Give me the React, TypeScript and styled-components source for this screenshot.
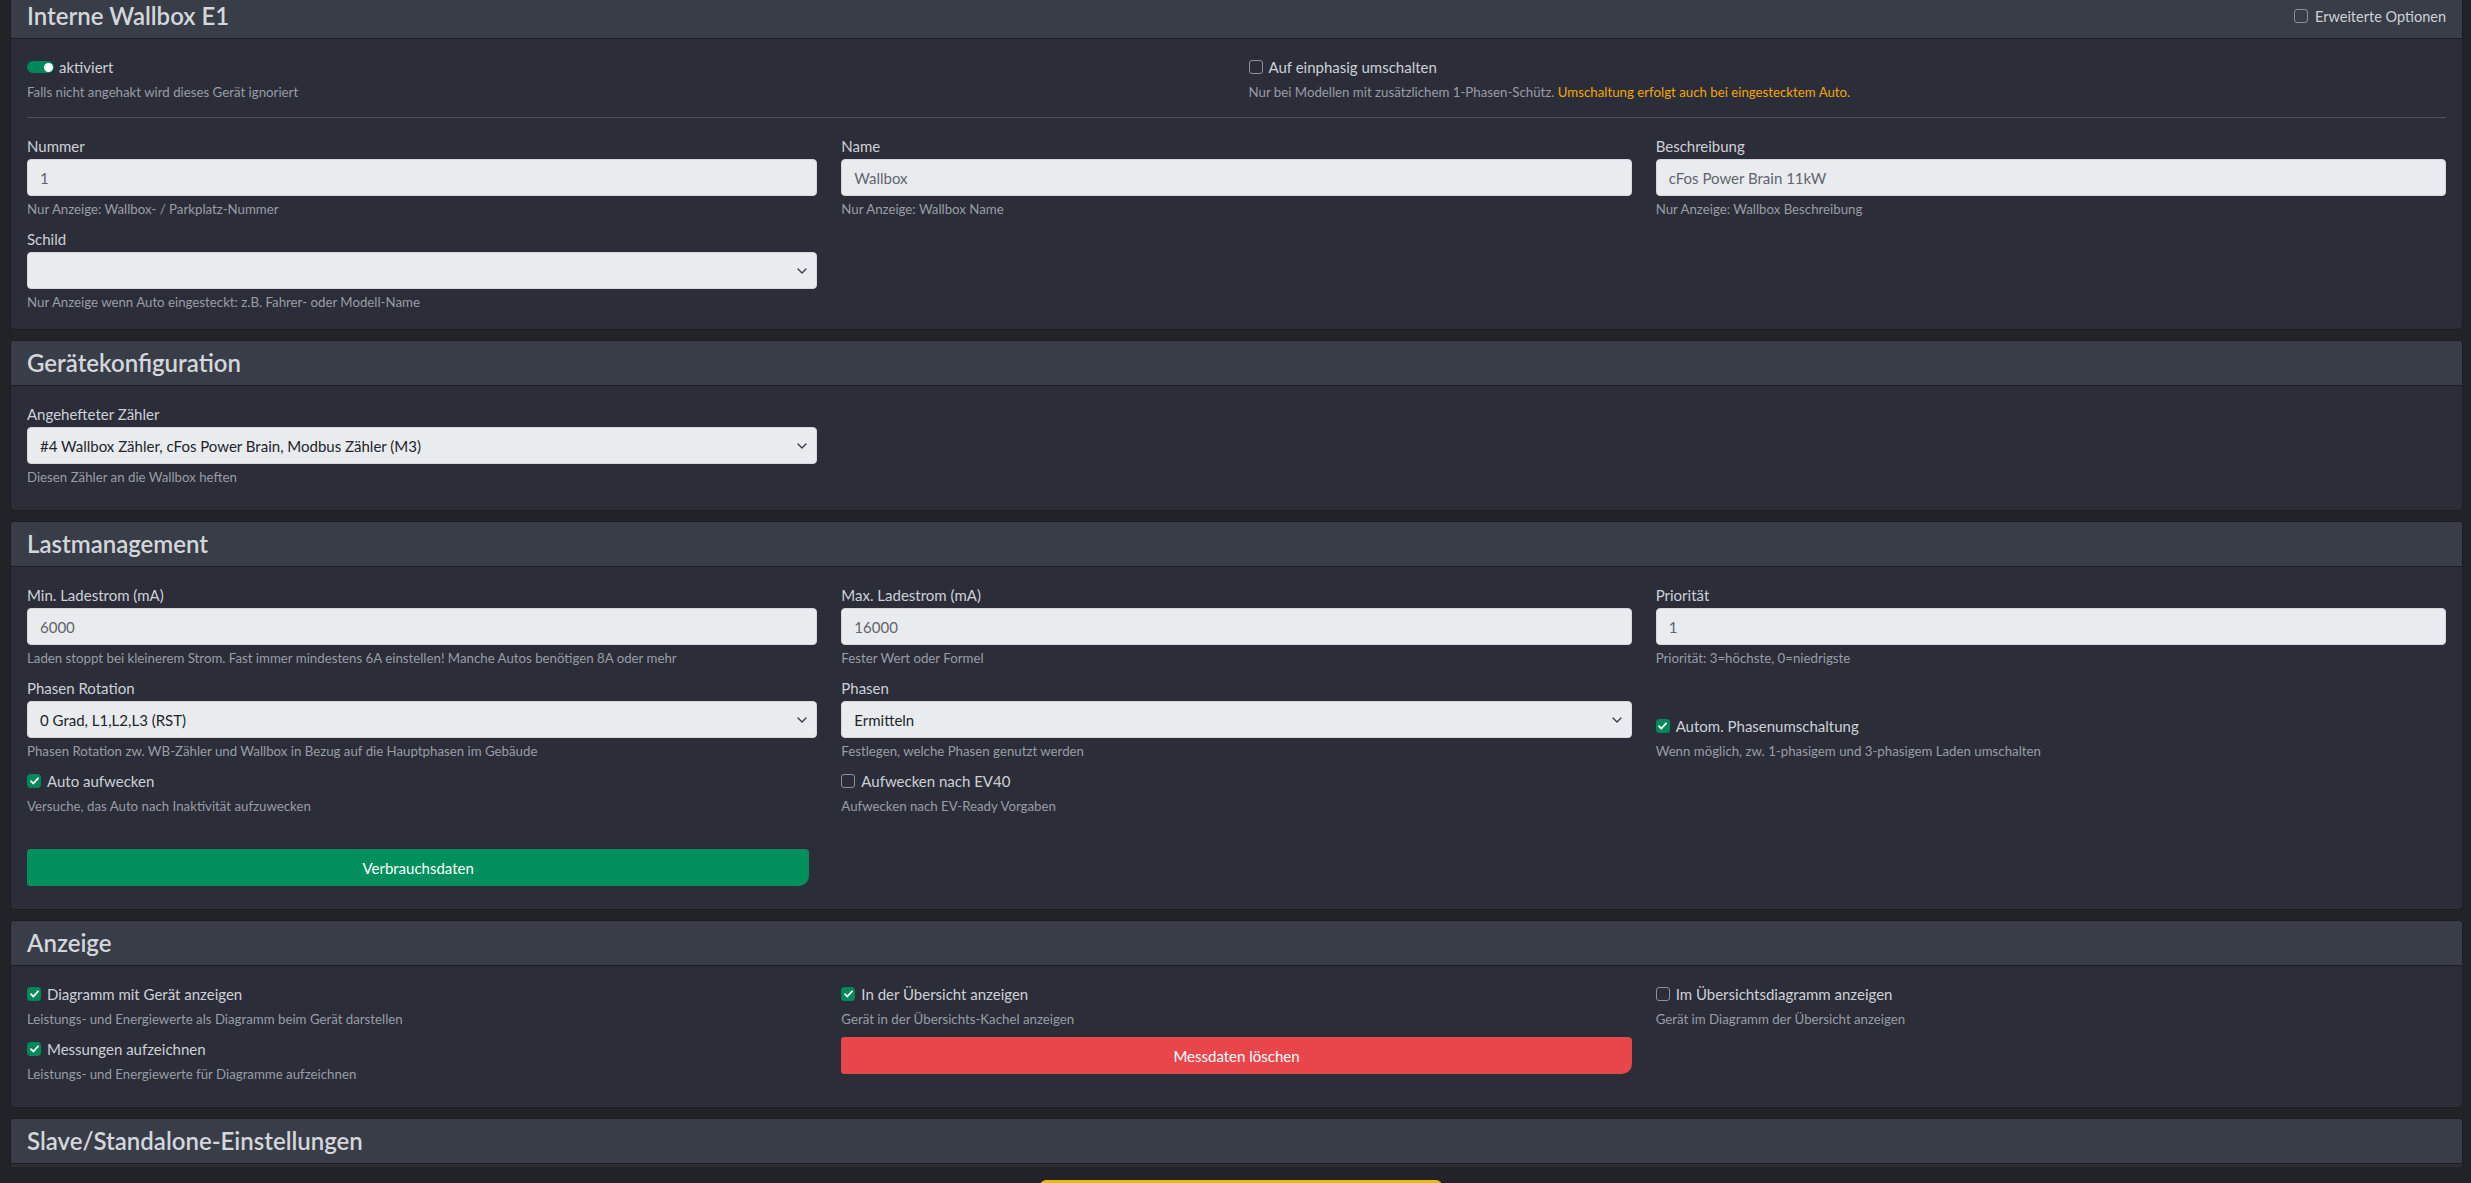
import React from 'react';
import styled, { createGlobalStyle } from 'styled-components';

const Global = createGlobalStyle`
  * { box-sizing: border-box; }
  html, body {
    margin: 0;
    padding: 0;
    height: 100%;
    overflow: hidden;
    background: #212328;
  }
  body {
    font-family: Lato, "Open Sans", sans-serif;
    color: #cdd1d7;
  }
`;

const Page = styled.div`
  height: 1183px;
  display: flex;
  flex-direction: column;
  overflow: hidden;
`;

const Scroller = styled.main`
  height: 1167px;
  flex: none;
  overflow: hidden;
`;

const Stack = styled.div`
  margin-top: -7px;
  padding: 0 8px 0 10px;
  display: flex;
  flex-direction: column;
  gap: 10px;
`;

const Card = styled.section`
  flex: none;
  background: #2b2d39;
  border: 1px solid #1b1d21;
  border-radius: 4px;
`;

const CardHeader = styled.header`
  height: 45px;
  padding: 0 16px;
  display: flex;
  align-items: center;
  justify-content: space-between;
  background: #393d48;
  border-bottom: 1px solid #1b1d21;
  border-radius: 3px 3px 0 0;
`;

const Title = styled.h4`
  margin: 0;
  font-family: Lato, sans-serif;
  font-size: 24px;
  font-weight: 600;
  line-height: 1.2;
  color: #d3d7dc;
`;

const CardBody = styled.div<{ $pb?: number }>`
  padding: 16px 16px ${p => p.$pb ?? 23}px;
`;

const Grid = styled.div<{ $cols: number }>`
  display: grid;
  grid-template-columns: repeat(${p => p.$cols}, minmax(0, 1fr));
  column-gap: 24px;
  row-gap: 8px;
  align-items: end;
`;

const Divider = styled.hr`
  margin: 15px 0 16px;
  border: 0;
  border-top: 1px solid #4c4f58;
`;

const Group = styled.div<{ $top?: boolean }>`
  min-width: 0;
  align-self: ${p => (p.$top ? 'start' : 'end')};
`;

const Label = styled.label`
  display: block;
  font-size: 15px;
  line-height: 24px;
  margin-bottom: 1px;
  color: #cdd1d7;
`;

const Input = styled.input`
  display: block;
  width: 100%;
  height: 37px;
  padding: 0 12px;
  font-family: Lato, sans-serif;
  font-size: 15px;
  color: #5f656d;
  background: #e9ecef;
  border: 1px solid #d3d8dd;
  border-radius: 4px;
  outline: none;
`;

const SelectWrap = styled.div`
  position: relative;
`;

const Select = styled.select`
  display: block;
  width: 100%;
  height: 37px;
  padding: 0 36px 0 12px;
  font-family: Lato, sans-serif;
  font-size: 15px;
  color: #212529;
  background: #e9ecef;
  border: 1px solid #d3d8dd;
  border-radius: 4px;
  appearance: none;
  outline: none;
`;

const Chevron = styled.svg`
  position: absolute;
  right: 10px;
  top: 50%;
  width: 10px;
  height: 6px;
  margin-top: -3px;
  pointer-events: none;
`;

const Help = styled.div`
  margin-top: 3px;
  font-size: 13.25px;
  line-height: 20px;
  color: #989da6;
`;

const Warn = styled.span`
  color: #f2a50d;
`;

const CheckRow = styled.label<{ $small?: boolean }>`
  display: flex;
  align-items: center;
  gap: ${p => (p.$small ? 7 : 6)}px;
  height: 24px;
  font-size: ${p => (p.$small ? 14.5 : 15)}px;
  color: #cdd1d7;
  cursor: pointer;
`;

const Box = styled.span<{ $on: boolean }>`
  flex: none;
  width: 14px;
  height: 14px;
  display: flex;
  align-items: center;
  justify-content: center;
  border-radius: 3px;
  border: 1px solid ${p => (p.$on ? '#00875a' : '#8a8f98')};
  background: ${p => (p.$on ? '#00875a' : 'transparent')};
`;

const SwitchTrack = styled.span`
  flex: none;
  width: 27px;
  height: 12px;
  padding: 0 1.5px;
  display: flex;
  align-items: center;
  justify-content: flex-end;
  border-radius: 6px;
  background: #00875a;
`;

const SwitchKnob = styled.span`
  width: 9px;
  height: 9px;
  border-radius: 50%;
  background: #ffffff;
`;

const SwitchRow = styled.label`
  display: flex;
  align-items: center;
  gap: 5px;
  height: 24px;
  font-size: 15px;
  color: #cdd1d7;
`;

const ActionButton = styled.button<{ $tone: 'green' | 'red'; $inset?: number }>`
  display: block;
  width: calc(100% - ${p => p.$inset ?? 0}px);
  height: 37px;
  border: 0;
  border-radius: 3px 4px 10px 3px;
  font-family: Lato, sans-serif;
  font-size: 15px;
  color: #ffffff;
  background: ${p => (p.$tone === 'green' ? '#008f5d' : '#e8464b')};
  cursor: pointer;
`;

const ButtonRow = styled.div`
  margin-top: 33px;
`;

const Footer = styled.footer`
  flex: 1;
  display: flex;
  justify-content: center;
  padding: 13px 0 0 11px;
`;

const SaveButton = styled.button`
  width: 402px;
  height: 38px;
  border: 0;
  border-radius: 6px;
  background: #e9b90b;
  font-family: Lato, sans-serif;
  font-size: 15px;
  color: #212529;
`;

const Check = ({ on, children, small }: { on: boolean; children: React.ReactNode; small?: boolean }) => (
  <CheckRow $small={small}>
    <Box $on={on}>
      {on && (
        <svg width="9" height="8" viewBox="0 0 9 8">
          <path d="M1 4.2 3.4 6.5 8 1.3" fill="none" stroke="#fff" strokeWidth="1.8" strokeLinecap="round" strokeLinejoin="round" />
        </svg>
      )}
    </Box>
    {children}
  </CheckRow>
);

const Field = ({ label, value, help }: { label: string; value: string; help: string }) => (
  <Group>
    <Label>{label}</Label>
    <Input defaultValue={value} />
    <Help>{help}</Help>
  </Group>
);

const SelectField = ({ label, value, help }: { label: string; value: string; help: string }) => (
  <Group>
    <Label>{label}</Label>
    <SelectWrap>
      <Select defaultValue={value}>
        <option value={value}>{value}</option>
      </Select>
      <Chevron viewBox="0 0 10 6">
        <path d="M1 1l4 4 4-4" fill="none" stroke="#343a40" strokeWidth="1.3" strokeLinecap="round" strokeLinejoin="round" />
      </Chevron>
    </SelectWrap>
    <Help>{help}</Help>
  </Group>
);

const CheckField = ({ on, label, help, top }: { on: boolean; label: string; help: string; top?: boolean }) => (
  <Group $top={top}>
    <Check on={on}>{label}</Check>
    <Help>{help}</Help>
  </Group>
);

export default function App() {
  return (
    <Page>
      <Global />
      <Scroller>
        <Stack>
          <Card>
            <CardHeader>
              <Title>Interne Wallbox E1</Title>
              <Check on={false} small>Erweiterte Optionen</Check>
            </CardHeader>
            <CardBody $pb={17}>
              <Grid $cols={2}>
                <Group>
                  <SwitchRow>
                    <SwitchTrack><SwitchKnob /></SwitchTrack>
                    aktiviert
                  </SwitchRow>
                  <Help>Falls nicht angehakt wird dieses Gerät ignoriert</Help>
                </Group>
                <Group>
                  <Check on={false}>Auf einphasig umschalten</Check>
                  <Help>
                    Nur bei Modellen mit zusätzlichem 1-Phasen-Schütz. <Warn>Umschaltung erfolgt auch bei eingestecktem Auto.</Warn>
                  </Help>
                </Group>
              </Grid>
              <Divider />
              <Grid $cols={3}>
                <Field label="Nummer" value="1" help="Nur Anzeige: Wallbox- / Parkplatz-Nummer" />
                <Field label="Name" value="Wallbox" help="Nur Anzeige: Wallbox Name" />
                <Field label="Beschreibung" value="cFos Power Brain 11kW" help="Nur Anzeige: Wallbox Beschreibung" />
                <SelectField label="Schild" value="" help="Nur Anzeige wenn Auto eingesteckt: z.B. Fahrer- oder Modell-Name" />
              </Grid>
            </CardBody>
          </Card>

          <Card>
            <CardHeader>
              <Title>Gerätekonfiguration</Title>
            </CardHeader>
            <CardBody>
              <Grid $cols={3}>
                <SelectField
                  label="Angehefteter Zähler"
                  value="#4 Wallbox Zähler, cFos Power Brain, Modbus Zähler (M3)"
                  help="Diesen Zähler an die Wallbox heften"
                />
              </Grid>
            </CardBody>
          </Card>

          <Card>
            <CardHeader>
              <Title>Lastmanagement</Title>
            </CardHeader>
            <CardBody>
              <Grid $cols={3}>
                <Field
                  label="Min. Ladestrom (mA)"
                  value="6000"
                  help="Laden stoppt bei kleinerem Strom. Fast immer mindestens 6A einstellen! Manche Autos benötigen 8A oder mehr"
                />
                <Field label="Max. Ladestrom (mA)" value="16000" help="Fester Wert oder Formel" />
                <Field label="Priorität" value="1" help="Priorität: 3=höchste, 0=niedrigste" />
                <SelectField
                  label="Phasen Rotation"
                  value="0 Grad, L1,L2,L3 (RST)"
                  help="Phasen Rotation zw. WB-Zähler und Wallbox in Bezug auf die Hauptphasen im Gebäude"
                />
                <SelectField label="Phasen" value="Ermitteln" help="Festlegen, welche Phasen genutzt werden" />
                <CheckField on label="Autom. Phasenumschaltung" help="Wenn möglich, zw. 1-phasigem und 3-phasigem Laden umschalten" />
                <CheckField on label="Auto aufwecken" help="Versuche, das Auto nach Inaktivität aufzuwecken" />
                <CheckField on={false} label="Aufwecken nach EV40" help="Aufwecken nach EV-Ready Vorgaben" />
              </Grid>
              <Grid $cols={3}>
                <ButtonRow>
                  <ActionButton $tone="green" $inset={8}>Verbrauchsdaten</ActionButton>
                </ButtonRow>
              </Grid>
            </CardBody>
          </Card>

          <Card>
            <CardHeader>
              <Title>Anzeige</Title>
            </CardHeader>
            <CardBody>
              <Grid $cols={3}>
                <CheckField on label="Diagramm mit Gerät anzeigen" help="Leistungs- und Energiewerte als Diagramm beim Gerät darstellen" />
                <CheckField on label="In der Übersicht anzeigen" help="Gerät in der Übersichts-Kachel anzeigen" />
                <CheckField on={false} label="Im Übersichtsdiagramm anzeigen" help="Gerät im Diagramm der Übersicht anzeigen" />
                <CheckField on top label="Messungen aufzeichnen" help="Leistungs- und Energiewerte für Diagramme aufzeichnen" />
                <Group $top>
                  <ActionButton $tone="red">Messdaten löschen</ActionButton>
                </Group>
              </Grid>
            </CardBody>
          </Card>

          <Card>
            <CardHeader>
              <Title>Slave/Standalone-Einstellungen</Title>
            </CardHeader>
            <CardBody />
          </Card>
        </Stack>
      </Scroller>
      <Footer>
        <SaveButton aria-label="Speichern" />
      </Footer>
    </Page>
  );
}
